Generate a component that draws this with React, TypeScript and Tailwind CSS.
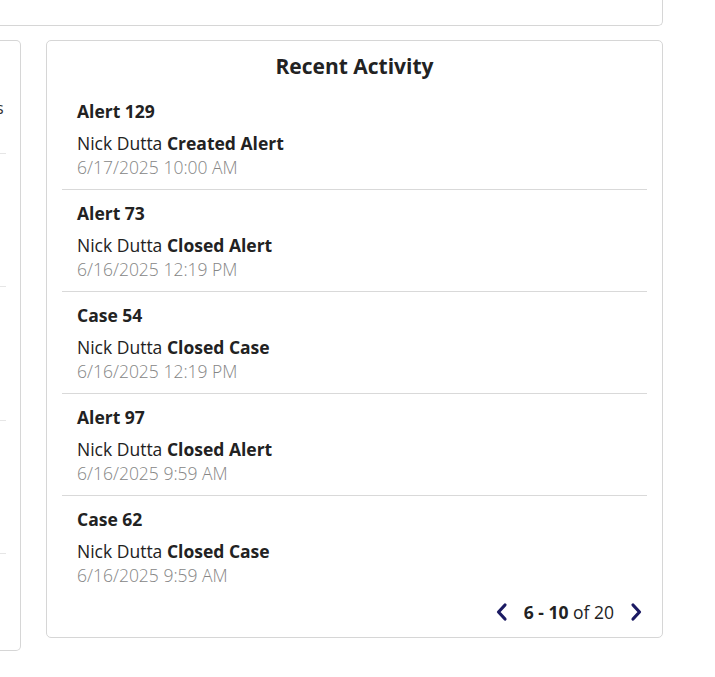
import React from 'react';

interface Activity {
  id: string;
  user: string;
  action: string;
  date: string;
}

const activities: Activity[] = [
  { id: 'Alert 129', user: 'Nick Dutta', action: 'Created Alert', date: '6/17/2025 10:00 AM' },
  { id: 'Alert 73', user: 'Nick Dutta', action: 'Closed Alert', date: '6/16/2025 12:19 PM' },
  { id: 'Case 54', user: 'Nick Dutta', action: 'Closed Case', date: '6/16/2025 12:19 PM' },
  { id: 'Alert 97', user: 'Nick Dutta', action: 'Closed Alert', date: '6/16/2025 9:59 AM' },
  { id: 'Case 62', user: 'Nick Dutta', action: 'Closed Case', date: '6/16/2025 9:59 AM' },
];

const Chevron = ({ dir }: { dir: 'left' | 'right' }) => (
  <svg width="13" height="20" viewBox="0 0 13 20" fill="none" stroke="#1b1a63" strokeWidth={3.2} strokeLinecap="round" strokeLinejoin="round">
    {dir === 'left' ? <polyline points="10,3 3.5,10 10,17" /> : <polyline points="3,3 9.5,10 3,17" />}
  </svg>
);

const App: React.FC = () => {
  return (
    <div
      className="w-[715px] h-[677px] bg-white text-[#222] overflow-hidden pr-[52px]"
      style={{ fontFamily: '"Open Sans", "Liberation Sans", sans-serif' }}
    >
      {/* Top card (cut off) */}
      <div className="h-[26px] border-b border-r border-[#d6d6d6] rounded-br-[5px]" />

      <div className="flex mt-[14px]">
        {/* Left card (cut off) */}
        <div className="w-[21px] h-[611px] border-y border-r border-[#d6d6d6] rounded-r-[5px] overflow-hidden shrink-0">
          <div className="pt-[55px] text-[16px] leading-6 -ml-[4px] text-[#333]">s</div>
          <div className="mt-[33px] h-px w-[6px] bg-[#e6e6e6]" />
          <div className="mt-[132px] h-px w-[6px] bg-[#e6e6e6]" />
          <div className="mt-[133px] h-px w-[6px] bg-[#e6e6e6]" />
          <div className="mt-[132px] h-px w-[6px] bg-[#e6e6e6]" />
        </div>

        {/* Recent Activity */}
        <div className="ml-[25px] w-[617px] h-[598px] border border-[#d6d6d6] rounded-[5px] px-[15px] pt-[11px]">
          <h2 className="text-center text-[21px] leading-7 font-bold">Recent Activity</h2>
          <div className="mt-[8px]">
            {activities.map((a, i) => (
              <div
                key={a.id}
                className={`pl-[15px] pt-[11px] ${i < activities.length - 1 ? 'pb-[10px] border-b border-[#d9d9d9]' : 'pb-[2px]'}`}
              >
                <div className="text-[17.5px] leading-6 font-bold">{a.id}</div>
                <div className="mt-2 text-[17.5px] leading-6">
                  {a.user} <span className="font-bold">{a.action}</span>
                </div>
                <div className="text-[17.5px] leading-6 font-light text-[#858585]">{a.date}</div>
              </div>
            ))}
          </div>
          <div className="mt-[11px] flex items-center justify-end pr-[3px] text-[17.5px] leading-6">
            <button className="px-[1px]"><Chevron dir="left" /></button>
            <span className="mx-[15px]">
              <span className="font-bold">6 - 10</span> of 20
            </span>
            <button className="px-[1px]"><Chevron dir="right" /></button>
          </div>
        </div>
      </div>
    </div>
  );
};

export default App;
